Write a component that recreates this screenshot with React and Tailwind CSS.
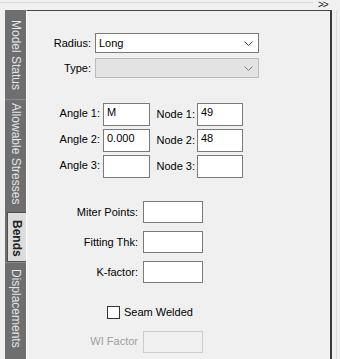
import React from 'react';

const font = { fontFamily: '"Liberation Sans", Arial, sans-serif' };

const Chevron = ({ color = '#505050' }) => (
  <svg width="9" height="5" viewBox="0 0 9 5" className="shrink-0">
    <path d="M0.5 0.5 L4.5 4.5 L8.5 0.5" fill="none" stroke={color} strokeWidth="1" />
  </svg>
);

const Combo = ({ value, disabled }) => (
  <div
    className={`w-[164px] h-[20px] border flex items-center justify-between pl-[3px] pr-[5px] ${
      disabled ? 'bg-[#e3e3e3] border-[#bcbcbc]' : 'bg-white border-[#7a7a7a]'
    }`}
  >
    <span className="text-[11px] text-black">{value}</span>
    <Chevron color={disabled ? '#7a7a7a' : '#404040'} />
  </div>
);

const Box = ({ value, w = 'w-[47px]', h = 'h-[23px]', disabled }) => (
  <div
    className={`${w} ${h} border pl-[3px] pt-[2px] text-[11px] leading-[13px] text-black ${
      disabled ? 'bg-[#f0f0f0] border-[#cccccc]' : 'bg-white border-[#7a7a7a]'
    }`}
  >
    {value}
  </div>
);

const Tab = ({ label, className, active }) => (
  <div className={`flex justify-center ${className}`}>
    <span
      className={`[writing-mode:vertical-rl] text-[12px] leading-[14px] ${
        active ? 'font-bold text-[#202020]' : 'text-[#e2e4e8]'
      }`}
    >
      {label}
    </span>
  </div>
);

const AngleRow = ({ n, angle, node }) => (
  <div className="flex items-center h-[23px]">
    <span className="w-[74px] text-right text-[11px] pr-[1px] -mt-[2px]">Angle {n}:</span>
    <div className="ml-[2px]">
      <Box value={angle} />
    </div>
    <span className="w-[45px] text-right text-[11px] -mt-[1px]">Node {n}:</span>
    <div className="ml-[2px]">
      <Box value={node} w="w-[46px]" />
    </div>
  </div>
);

const FieldRow = ({ label, disabled }) => (
  <div className="flex items-center h-[22px]">
    <span className={`w-[111px] text-right text-[11px] ${disabled ? 'text-[#a0a0a0]' : 'text-black'}`}>
      {label}
    </span>
    <div className="ml-[5px]">
      <Box w="w-[60px]" h="h-[22px]" disabled={disabled} />
    </div>
  </div>
);

export default function App() {
  return (
    <div className="w-[340px] h-[359px] bg-[#f0f0f0] overflow-hidden flex flex-col text-black" style={font}>
      {/* top strip */}
      <div className="h-[10px] flex items-start">
        <div className="w-[313px] h-px mt-[2px] bg-[#dadada]" />
        <span className="ml-[5px] text-[10px] leading-[9px] tracking-[-1px] text-[#202020]">&gt;&gt;</span>
      </div>

      <div className="flex h-[349px]">
        {/* vertical tabs */}
        <div className="ml-[5px] w-[21px] bg-[#6e6e6e] flex flex-col">
          <Tab label="Model Status" className="h-[90px] pt-[10px] border-b border-[#8c8c8c]" />
          <Tab label="Allowable Stresses" className="h-[112px] pt-[3px]" />
          <Tab
            label="Bends"
            active
            className="h-[50px] ml-[2px] pt-[7px] bg-[#dcdcdc] border border-r-0 border-[#505050]"
          />
          <Tab label="Displacements" className="flex-1 pt-[6px] border-t border-[#8c8c8c]" />
        </div>

        {/* panel */}
        <div className="w-[306px] border-t border-t-[#454545] border-r-2 border-r-[#3a3a3a] border-l border-l-white flex flex-col">
          <div className="pt-[22px] flex flex-col gap-[5px]">
            <div className="flex items-center">
              <span className="w-[64px] text-right text-[11px]">Radius:</span>
              <div className="ml-[4px]">
                <Combo value="Long" />
              </div>
            </div>
            <div className="flex items-center">
              <span className="w-[64px] text-right text-[11px]">Type:</span>
              <div className="ml-[4px]">
                <Combo value="" disabled />
              </div>
            </div>
          </div>

          <div className="mt-[25px] flex flex-col gap-[3px]">
            <AngleRow n={1} angle="M" node="49" />
            <AngleRow n={2} angle="0.000" node="48" />
            <AngleRow n={3} angle="" node="" />
          </div>

          <div className="mt-[23px] flex flex-col gap-[8px]">
            <FieldRow label="Miter Points:" />
            <FieldRow label="Fitting Thk:" />
            <FieldRow label="K-factor:" />
          </div>

          <div className="mt-[21px] ml-[80px] flex items-center gap-[4px]">
            <div className="w-[13px] h-[13px] border border-[#333333] bg-white" />
            <span className="text-[11px]">Seam Welded</span>
          </div>

          <div className="mt-[10px]">
            <FieldRow label="WI Factor" disabled />
          </div>
        </div>

        <div className="ml-[4px] w-[4px] border-l border-[#dcdcdc]" />
      </div>
    </div>
  );
}
